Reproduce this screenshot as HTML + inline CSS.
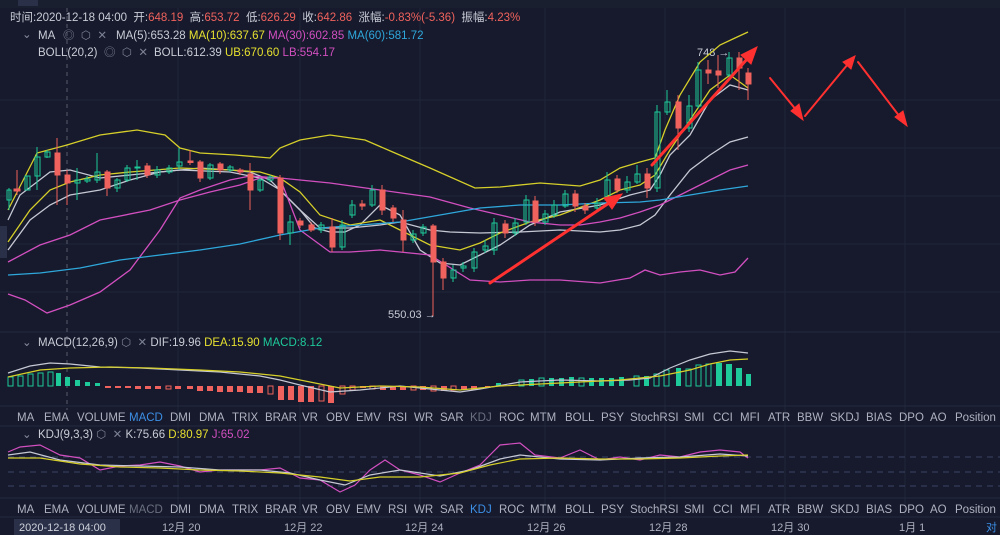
<!DOCTYPE html>
<html><head><meta charset="utf-8"><style>
body{margin:0;width:1000px;height:535px;background:#161a2c;overflow:hidden;font-family:"Liberation Sans","Noto Sans CJK SC",sans-serif;}
svg{position:absolute;left:0;top:0}
</style></head><body>
<svg width="1000" height="535" viewBox="0 0 1000 535" font-family="Liberation Sans, Noto Sans CJK SC, sans-serif">
<rect width="1000" height="535" fill="#161a2c"/>
<rect x="0" y="0" width="1000" height="8" fill="#1a1f30"/>
<rect x="18" y="0" width="20" height="6" fill="#2a3048"/>
<g stroke="#20253a" stroke-width="1">
<line x1="178" y1="8" x2="178" y2="515"/><line x1="300" y1="8" x2="300" y2="515"/><line x1="420" y1="8" x2="420" y2="515"/><line x1="545" y1="8" x2="545" y2="515"/><line x1="665" y1="8" x2="665" y2="515"/><line x1="785" y1="8" x2="785" y2="515"/><line x1="905" y1="8" x2="905" y2="515"/>
<line x1="0" y1="100" x2="1000" y2="100"/><line x1="0" y1="148" x2="1000" y2="148"/><line x1="0" y1="196" x2="1000" y2="196"/><line x1="0" y1="244" x2="1000" y2="244"/><line x1="0" y1="292" x2="1000" y2="292"/>
</g>
<line x1="0" y1="332" x2="1000" y2="332" stroke="#262b3f"/>
<line x1="0" y1="406" x2="1000" y2="406" stroke="#262b3f"/>
<line x1="0" y1="426" x2="1000" y2="426" stroke="#262b3f"/>
<line x1="0" y1="498" x2="1000" y2="498" stroke="#262b3f"/>
<line x1="0" y1="517" x2="1000" y2="517" stroke="#262b3f"/>
<line x1="67" y1="8" x2="67" y2="410" stroke="#555a6a" stroke-dasharray="4,4"/>
<rect x="0" y="226" width="7" height="32" fill="#2a3048"/>
<g font-size="11.5" fill="#c9ccd6">
<text x="10" y="21">时间:2020-12-18 04:00 &#160;开:<tspan fill="#f0625d">648.19</tspan> &#160;高:<tspan fill="#f0625d">653.72</tspan> &#160;低:<tspan fill="#f0625d">626.29</tspan> &#160;收:<tspan fill="#f0625d">642.86</tspan> &#160;涨幅:<tspan fill="#f0625d">-0.83%(-5.36)</tspan> &#160;振幅:<tspan fill="#f0625d">4.23%</tspan></text>
<text x="22" y="38" fill="#8a8fa0">⌄</text>
<text x="38" y="39">MA</text>
<text x="63" y="39" fill="#7d8294">◎ &#160;⬡ &#160;✕</text>
<text x="116" y="39">MA(5):653.28 <tspan fill="#e6e030">MA(10):637.67</tspan> <tspan fill="#d24fc0">MA(30):602.85</tspan> <tspan fill="#2fa7db">MA(60):581.72</tspan></text>
<text x="38" y="56">BOLL(20,2)</text>
<text x="104" y="56" fill="#7d8294">◎ &#160;⬡ &#160;✕</text>
<text x="154" y="56">BOLL:612.39 <tspan fill="#e6e030">UB:670.60</tspan> <tspan fill="#d24fc0">LB:554.17</tspan></text>
<text x="22" y="346" fill="#8a8fa0">⌄</text>
<text x="38" y="346">MACD(12,26,9) <tspan fill="#7d8294">⬡ &#160;✕</tspan> DIF:19.96 <tspan fill="#e6e030">DEA:15.90</tspan> <tspan fill="#1ec99a">MACD:8.12</tspan></text>
<text x="22" y="438" fill="#8a8fa0">⌄</text>
<text x="38" y="438">KDJ(9,3,3) <tspan fill="#7d8294">⬡ &#160;✕</tspan> K:75.66 <tspan fill="#e6e030">D:80.97</tspan> <tspan fill="#d24fc0">J:65.02</tspan></text>
<text x="697" y="56" font-size="11">748 →</text>
<text x="388" y="318" font-size="11">550.03 →</text>
</g>
<g font-size="11.5" fill="#aeb2c0">
<text x="17" y="421">MA</text><text x="44" y="421">EMA</text><text x="77" y="421">VOLUME</text><text x="129" y="421" fill="#3d8fe6">MACD</text><text x="170" y="421">DMI</text><text x="199" y="421">DMA</text><text x="232" y="421">TRIX</text><text x="265" y="421">BRAR</text><text x="302" y="421">VR</text><text x="326" y="421">OBV</text><text x="356" y="421">EMV</text><text x="388" y="421">RSI</text><text x="414" y="421">WR</text><text x="440" y="421">SAR</text><text x="470" y="421" fill="#6b7080">KDJ</text><text x="499" y="421">ROC</text><text x="530" y="421">MTM</text><text x="565" y="421">BOLL</text><text x="601" y="421">PSY</text><text x="630" y="421">StochRSI</text><text x="684" y="421">SMI</text><text x="713" y="421">CCI</text><text x="740" y="421">MFI</text><text x="768" y="421">ATR</text><text x="797" y="421">BBW</text><text x="830" y="421">SKDJ</text><text x="866" y="421">BIAS</text><text x="899" y="421">DPO</text><text x="930" y="421">AO</text><text x="955" y="421">Position</text>
</g>
<g font-size="11.5" fill="#aeb2c0">
<text x="17" y="513">MA</text><text x="44" y="513">EMA</text><text x="77" y="513">VOLUME</text><text x="129" y="513" fill="#6b7080">MACD</text><text x="170" y="513">DMI</text><text x="199" y="513">DMA</text><text x="232" y="513">TRIX</text><text x="265" y="513">BRAR</text><text x="302" y="513">VR</text><text x="326" y="513">OBV</text><text x="356" y="513">EMV</text><text x="388" y="513">RSI</text><text x="414" y="513">WR</text><text x="440" y="513">SAR</text><text x="470" y="513" fill="#3d8fe6">KDJ</text><text x="499" y="513">ROC</text><text x="530" y="513">MTM</text><text x="565" y="513">BOLL</text><text x="601" y="513">PSY</text><text x="630" y="513">StochRSI</text><text x="684" y="513">SMI</text><text x="713" y="513">CCI</text><text x="740" y="513">MFI</text><text x="768" y="513">ATR</text><text x="797" y="513">BBW</text><text x="830" y="513">SKDJ</text><text x="866" y="513">BIAS</text><text x="899" y="513">DPO</text><text x="930" y="513">AO</text><text x="955" y="513">Position</text>
</g>
<rect x="14" y="519" width="106" height="16" fill="#2a3048"/>
<g font-size="11" fill="#aeb2c0">
<text x="19" y="531" fill="#d0d3dc">2020-12-18 04:00</text>
<text x="162" y="531">12月 20</text><text x="284" y="531">12月 22</text><text x="405" y="531">12月 24</text><text x="527" y="531">12月 26</text><text x="649" y="531">12月 28</text><text x="771" y="531">12月 30</text><text x="899" y="531">1月 1</text><text x="986" y="531" fill="#3d8fe6">对</text>
</g>
<g fill="none" stroke-width="1.3">
<polyline stroke="#d6cf2a" points="8,210 37,153 67,145 100,135 137,130 165,135 180,148 200,153 235,155 270,158 280,148 300,140 330,135 365,140 395,153 430,168 475,188 500,187 540,183 580,186 600,180 620,168 640,162 655,158 665,130 680,95 700,62 720,45 735,38 748,32"/>
<polyline stroke="#c6c8d4" points="8,250 30,220 50,205 70,195 100,190 130,180 160,172 200,168 230,170 250,172 270,180 285,195 300,210 320,228 350,228 380,225 400,222 430,230 450,232 480,233 520,232 560,230 600,232 620,230 640,225 655,215 670,195 690,170 710,155 730,142 748,137"/>
<polyline stroke="#c6c8d4" points="8,220 20,195 50,172 70,170 100,178 130,175 180,170 230,172 260,178 280,190 300,210 315,228 330,232 345,232 360,225 380,205 400,215 420,250 440,263 460,265 480,255 500,245 530,225 560,212 600,205 630,195 650,190 660,175 670,155 690,135 710,100 730,85 748,90"/>
<polyline stroke="#d6cf2a" points="8,242 30,210 50,190 70,182 100,175 130,172 180,168 230,170 260,172 280,178 300,192 320,215 350,225 380,220 400,230 430,245 460,250 480,243 500,233 530,222 560,215 600,200 620,190 640,185 655,175 670,150 690,120 710,90 730,75 748,88"/>
<polyline stroke="#d24fc0" points="8,262 40,245 70,235 100,220 150,210 180,200 210,192 240,185 260,178 280,178 330,183 380,190 430,197 470,208 500,215 530,222 560,225 580,225 600,222 620,218 640,212 660,205 680,195 700,185 730,170 748,165"/>
<polyline stroke="#d24fc0" points="8,294 25,300 47,313 70,305 100,292 130,270 160,230 180,198 200,190 230,180 250,176 280,178 300,230 330,252 350,252 380,250 400,252 430,255 470,280 500,282 530,280 560,280 600,283 630,278 645,270 660,275 680,272 700,270 720,275 735,272 748,258"/>
<polyline stroke="#2fa7db" points="8,275 40,273 80,268 120,260 160,255 200,250 240,244 280,235 320,228 360,225 400,222 440,215 480,208 520,205 560,205 600,203 640,202 660,200 690,195 720,190 748,186"/>
</g>
<g stroke="#1ec99a" fill="none" stroke-width="1">
<path d="M9,188V210M17,170V195M27,176V190M37,147V190M47,150V158M77,168V200M87,176V183M97,153V183M117,178V192M127,165V182M137,160V180M157,166V178M169,165V174M179,148V170M210,163V180M230,165V172M260,178V192M270,175V182M290,215V245M321,222V233M342,220V250M352,200V218M372,185V207M413,230V243M423,224V236M453,265V282M463,262V272M474,248V272M485,240V253M494,218V255M515,218V236M526,195V225M545,210V225M554,200V218M565,190V208M597,198V211M607,172V203M627,176V193M637,165V184M657,105V192M667,90V115M689,95V132M698,62V108M729,52V78"/>
<rect x="7" y="190" width="4" height="10"/><rect x="25" y="176" width="5" height="14"/><rect x="35" y="157" width="5" height="19"/><rect x="45" y="152" width="5" height="5"/><rect x="75" y="180" width="5" height="3"/><rect x="85" y="179" width="5" height="2"/><rect x="95" y="172" width="5" height="8"/><rect x="115" y="180" width="5" height="8"/><rect x="125" y="168" width="5" height="12"/><rect x="135" y="167" width="5" height="1"/><rect x="155" y="170" width="5" height="5"/><rect x="167" y="168" width="5" height="4"/><rect x="177" y="162" width="5" height="4"/><rect x="208" y="165" width="5" height="13"/><rect x="228" y="167" width="5" height="3"/><rect x="258" y="180" width="5" height="10"/><rect x="268" y="177" width="5" height="3"/><rect x="288" y="222" width="5" height="11"/><rect x="319" y="225" width="5" height="5"/><rect x="340" y="225" width="5" height="22"/><rect x="350" y="205" width="5" height="10"/><rect x="370" y="190" width="5" height="15"/><rect x="411" y="234" width="5" height="6"/><rect x="421" y="227" width="5" height="6"/><rect x="451" y="270" width="5" height="8"/><rect x="461" y="266" width="5" height="2"/><rect x="472" y="252" width="5" height="16"/><rect x="483" y="246" width="5" height="4"/><rect x="492" y="223" width="5" height="27"/><rect x="513" y="223" width="5" height="10"/><rect x="524" y="200" width="5" height="22"/><rect x="543" y="214" width="5" height="8"/><rect x="552" y="205" width="5" height="10"/><rect x="563" y="194" width="5" height="12"/><rect x="595" y="203" width="5" height="5"/><rect x="605" y="180" width="5" height="20"/><rect x="625" y="182" width="5" height="8"/><rect x="635" y="174" width="5" height="8"/><rect x="655" y="112" width="5" height="76"/><rect x="665" y="102" width="5" height="10"/><rect x="687" y="106" width="5" height="22"/><rect x="696" y="70" width="5" height="36"/><rect x="727" y="58" width="5" height="17"/>
</g>
<g stroke="#f0625d" fill="#f0625d" stroke-width="1">
<path d="M17,170V195M57,138V205M67,170V205M107,170V196M147,163V178M190,150V165M200,160V182M220,162V174M240,168V175M250,163V210M280,175V240M300,218V228M311,222V232M332,218V252M362,200V210M382,185V215M393,205V222M403,210V252M433,224V316M443,258V290M505,220V238M535,196V226M575,190V212M585,203V214M617,175V193M647,168V198M678,95V150M708,60V84M718,55V88M739,52V90M748,68V100"/>
<rect x="14" y="189" width="6" height="2"/><rect x="55" y="153" width="5" height="22"/><rect x="65" y="175" width="5" height="8"/><rect x="105" y="172" width="5" height="16"/><rect x="145" y="166" width="5" height="9"/><rect x="188" y="161" width="5" height="1.5"/><rect x="198" y="162" width="5" height="16"/><rect x="218" y="164" width="5" height="6"/><rect x="238" y="170" width="5" height="2"/><rect x="248" y="174" width="5" height="16"/><rect x="278" y="178" width="5" height="55"/><rect x="298" y="221" width="5" height="4"/><rect x="309" y="225" width="5" height="5"/><rect x="330" y="227" width="5" height="20"/><rect x="360" y="204" width="5" height="2"/><rect x="380" y="190" width="5" height="20"/><rect x="391" y="208" width="5" height="10"/><rect x="401" y="220" width="5" height="20"/><rect x="431" y="226" width="5" height="36"/><rect x="441" y="262" width="5" height="16"/><rect x="503" y="224" width="5" height="9"/><rect x="533" y="201" width="5" height="21"/><rect x="573" y="194" width="5" height="12"/><rect x="583" y="206" width="5" height="4"/><rect x="615" y="179" width="5" height="11"/><rect x="645" y="174" width="5" height="14"/><rect x="676" y="102" width="5" height="26"/><rect x="706" y="70" width="5" height="3"/><rect x="716" y="71" width="5" height="4"/><rect x="737" y="58" width="5" height="10"/><rect x="746" y="73" width="5" height="11"/>
</g>
<g stroke="#ff3030" stroke-width="3" fill="#ff3030" stroke-linecap="round">
<line x1="490" y1="283" x2="612" y2="201"/><polygon points="622,194 604,198 612,209" stroke-width="1"/>
<line x1="652" y1="165" x2="748" y2="58"/><polygon points="757,47 741,55 751,64" stroke-width="1"/>
<line x1="770" y1="78" x2="797" y2="111" stroke-width="2"/><polygon points="803,120 791,111 799,104" stroke-width="1"/>
<line x1="805" y1="116" x2="848" y2="64" stroke-width="2"/><polygon points="855,56 843,62 851,69" stroke-width="1"/>
<line x1="858" y1="62" x2="900" y2="117" stroke-width="2"/><polygon points="907,126 895,117 903,111" stroke-width="1"/>
</g>
<g stroke="#1ec99a" fill="none">
<rect x="8" y="377" width="5" height="9"/><rect x="18" y="376" width="5" height="10"/><rect x="28" y="374" width="5" height="12"/><rect x="38" y="373" width="5" height="13"/><rect x="48" y="372" width="5" height="14"/>
<rect x="519" y="380" width="5" height="6"/><rect x="539" y="378" width="5" height="8"/><rect x="579" y="378" width="5" height="8"/><rect x="634" y="376" width="5" height="10"/><rect x="654" y="374" width="5" height="12"/><rect x="664" y="370" width="5" height="16"/><rect x="686" y="369" width="5" height="17"/><rect x="696" y="365" width="5" height="21"/><rect x="706" y="364" width="5" height="22"/>
</g>
<g fill="#1ec99a">
<rect x="56" y="373" width="5" height="13"/><rect x="65" y="377" width="5" height="9"/><rect x="75" y="380" width="5" height="6"/><rect x="85" y="382" width="5" height="4"/><rect x="95" y="383" width="5" height="3"/>
<rect x="529" y="379" width="5" height="7"/><rect x="549" y="378" width="5" height="8"/><rect x="559" y="378" width="5" height="8"/><rect x="569" y="377" width="5" height="9"/><rect x="589" y="378" width="5" height="8"/><rect x="599" y="378" width="5" height="8"/><rect x="609" y="378" width="5" height="8"/><rect x="619" y="377" width="5" height="9"/><rect x="644" y="376" width="5" height="10"/><rect x="676" y="368" width="5" height="18"/><rect x="716" y="363" width="6" height="23"/><rect x="726" y="364" width="6" height="22"/><rect x="736" y="368" width="6" height="18"/><rect x="746" y="374" width="5" height="12"/><rect x="496" y="383" width="5" height="3"/>
</g>
<g fill="#f0625d">
<rect x="105" y="386" width="6" height="2"/><rect x="115" y="386" width="6" height="2"/><rect x="125" y="386" width="6" height="2"/><rect x="135" y="386" width="6" height="3"/><rect x="145" y="386" width="6" height="3"/><rect x="155" y="386" width="6" height="3"/><rect x="175" y="386" width="6" height="3"/><rect x="187" y="386" width="6" height="3"/><rect x="197" y="386" width="6" height="5"/><rect x="207" y="386" width="6" height="5"/><rect x="217" y="386" width="6" height="6"/><rect x="227" y="386" width="6" height="6"/><rect x="237" y="386" width="6" height="6"/><rect x="247" y="386" width="6" height="7"/><rect x="257" y="386" width="6" height="7"/><rect x="278" y="386" width="6" height="14"/><rect x="288" y="386" width="6" height="14"/><rect x="298" y="386" width="6" height="16"/><rect x="308" y="386" width="6" height="16"/><rect x="328" y="386" width="6" height="17"/><rect x="360" y="386" width="6" height="2"/><rect x="380" y="386" width="6" height="4"/><rect x="390" y="386" width="6" height="4"/><rect x="400" y="386" width="6" height="4"/><rect x="420" y="386" width="6" height="4"/><rect x="441" y="386" width="6" height="5"/><rect x="461" y="386" width="6" height="4"/><rect x="471" y="386" width="6" height="4"/><rect x="485" y="386" width="5" height="2"/>
</g>
<g stroke="#f0625d" fill="none">
<rect x="166" y="386" width="5" height="3"/><rect x="268" y="386" width="5" height="8"/><rect x="319" y="386" width="5" height="15"/><rect x="340" y="386" width="5" height="8"/><rect x="350" y="386" width="5" height="4"/><rect x="370" y="386" width="5" height="3"/><rect x="411" y="386" width="5" height="4"/><rect x="431" y="386" width="5" height="5"/><rect x="451" y="386" width="5" height="4"/>
</g>
<g fill="none" stroke-width="1.2">
<polyline stroke="#c6c8d4" points="8,373 30,366 50,363 70,364 100,367 140,368 180,370 220,372 260,376 280,380 300,385 330,392 360,390 400,386 440,390 460,392 480,389 520,382 560,380 600,381 630,380 650,378 670,368 690,360 710,354 730,351 748,353"/>
<polyline stroke="#d6cf2a" points="8,377 40,370 70,368 110,367 150,368 200,370 240,372 280,376 310,382 340,388 380,386 420,387 460,390 500,386 540,384 580,382 620,380 660,376 690,370 710,364 730,360 748,359"/>
</g>
<g stroke="#3d4466" stroke-dasharray="6,5">
<line x1="8" y1="457" x2="1000" y2="457"/><line x1="8" y1="472" x2="1000" y2="472"/><line x1="8" y1="486" x2="1000" y2="486"/>
</g>
<g fill="none" stroke-width="1.2">
<polyline stroke="#d24fc0" points="8,452 20,447 40,445 60,455 80,458 100,470 120,466 140,465 160,462 180,466 200,472 220,470 240,470 260,470 280,468 300,478 320,480 340,492 355,485 370,470 385,460 400,470 420,475 440,482 460,473 480,465 500,445 520,443 535,455 560,458 580,450 600,460 620,457 640,460 660,455 680,457 700,452 720,450 740,452 748,458"/>
<polyline stroke="#c6c8d4" points="8,455 30,452 60,460 100,465 140,466 180,467 220,470 260,470 290,473 320,480 345,485 370,475 400,470 440,476 470,470 500,459 520,455 560,459 600,460 640,458 680,457 720,454 748,456"/>
<polyline stroke="#d6cf2a" points="8,458 40,458 80,464 120,467 160,468 200,470 240,471 280,473 320,477 350,481 380,477 420,477 460,473 490,465 520,459 560,458 600,459 640,459 680,458 720,456 748,455"/>
</g>
</svg>
</body></html>
